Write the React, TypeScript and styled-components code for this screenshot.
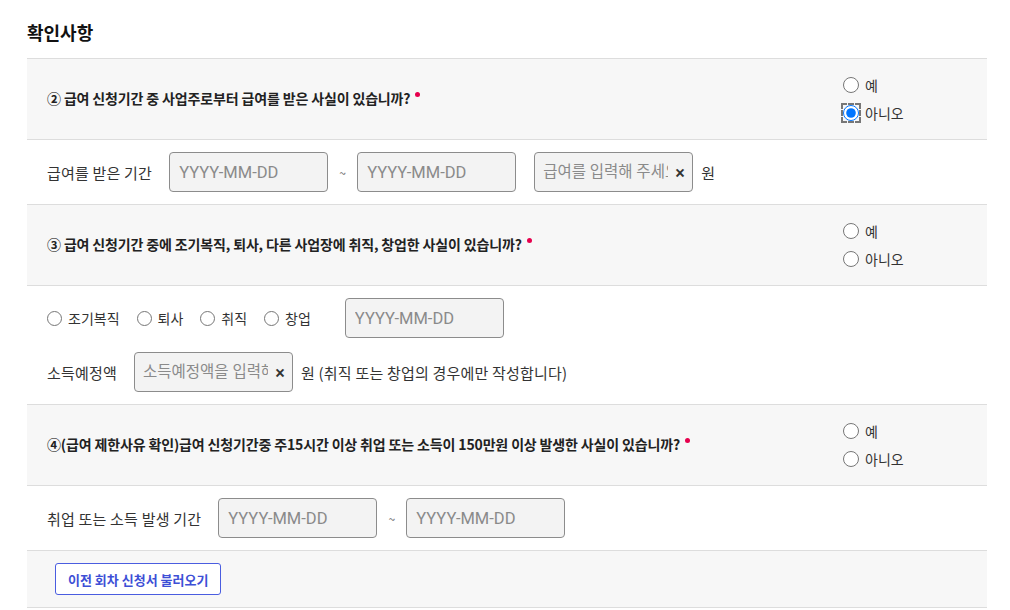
import { createGlobalStyle } from "styled-components";
import styled from "styled-components";

const GlobalStyle = createGlobalStyle`
  body {
    margin: 0;
    background: #fff;
    font-family: "Noto Sans CJK KR", "Noto Sans", sans-serif;
    color: #222;
  }
`;

const yesNo = ["예", "아니오"];
const changeOptions = ["조기복직", "퇴사", "취직", "창업"];

export default function App() {
  return (
    <Page>
      <GlobalStyle />
      <Title>확인사항</Title>
      <Section>
        <QuestionRow>
          <QuestionText>
            ② 급여 신청기간 중 사업주로부터 급여를 받은 사실이 있습니까?
            <Required />
          </QuestionText>
          <RadioGroup>
            {yesNo.map((label) => (
              <RadioLabel key={label}>
                <Radio
                  type="radio"
                  name="q2"
                  defaultChecked={label === "아니오"}
                  $focused={label === "아니오"}
                />
                {label}
              </RadioLabel>
            ))}
          </RadioGroup>
        </QuestionRow>
        <AnswerRow>
          <Line>
            <FieldLabel>급여를 받은 기간</FieldLabel>
            <DateInput placeholder="YYYY-MM-DD" />
            <Tilde>~</Tilde>
            <DateInput placeholder="YYYY-MM-DD" />
            <ClearBox $offset={18}>
              <ClearInput placeholder="급여를 입력해 주세요" />
              <ClearButton type="button">×</ClearButton>
            </ClearBox>
            <Unit>원</Unit>
          </Line>
        </AnswerRow>

        <QuestionRow>
          <QuestionText>
            ③ 급여 신청기간 중에 조기복직, 퇴사, 다른 사업장에 취직, 창업한 사실이 있습니까?
            <Required />
          </QuestionText>
          <RadioGroup>
            {yesNo.map((label) => (
              <RadioLabel key={label}>
                <Radio type="radio" name="q3" />
                {label}
              </RadioLabel>
            ))}
          </RadioGroup>
        </QuestionRow>
        <AnswerRow>
          <Line>
            {changeOptions.map((label) => (
              <InlineRadio key={label}>
                <Radio type="radio" name="change" $size={15} />
                {label}
              </InlineRadio>
            ))}
            <DateInput placeholder="YYYY-MM-DD" $offset={17} />
          </Line>
          <Line>
            <FieldLabel>소득예정액</FieldLabel>
            <ClearBox>
              <ClearInput placeholder="소득예정액을 입력해 주세요" />
              <ClearButton type="button">×</ClearButton>
            </ClearBox>
            <Unit>원 (취직 또는 창업의 경우에만 작성합니다)</Unit>
          </Line>
        </AnswerRow>

        <QuestionRow>
          <QuestionText>
            ④(급여 제한사유 확인)급여 신청기간중 주15시간 이상 취업 또는 소득이 150만원 이상 발생한 사실이 있습니까?
            <Required />
          </QuestionText>
          <RadioGroup>
            {yesNo.map((label) => (
              <RadioLabel key={label}>
                <Radio type="radio" name="q4" />
                {label}
              </RadioLabel>
            ))}
          </RadioGroup>
        </QuestionRow>
        <AnswerRow>
          <Line>
            <FieldLabel>취업 또는 소득 발생 기간</FieldLabel>
            <DateInput placeholder="YYYY-MM-DD" />
            <Tilde>~</Tilde>
            <DateInput placeholder="YYYY-MM-DD" />
          </Line>
        </AnswerRow>

        <FooterRow>
          <LoadButton type="button">이전 회차 신청서 불러오기</LoadButton>
        </FooterRow>
      </Section>
    </Page>
  );
}

const Page = styled.div`
  padding: 19px 23px 0 27px;
`;

const Title = styled.h2`
  margin: 0 0 13px;
  font-size: 18px;
  line-height: 26px;
  font-weight: 700;
  color: #111;
`;

const Section = styled.div`
  border-top: 1px solid #ddd;
`;

const QuestionRow = styled.div`
  display: flex;
  align-items: center;
  min-height: 80px;
  padding-left: 20px;
  background: #f7f7f7;
  border-bottom: 1px solid #ddd;
`;

const QuestionText = styled.div`
  flex: 1;
  margin-top: -2px;
  font-size: 14px;
  font-weight: 700;
  color: #222;
  letter-spacing: -0.15px;
`;

const Required = styled.span`
  display: inline-block;
  width: 5px;
  height: 5px;
  margin-left: 5px;
  border-radius: 50%;
  background: #e6004d;
  vertical-align: 7px;
`;

const RadioGroup = styled.div`
  display: flex;
  flex-direction: column;
  width: 144px;
`;

const RadioLabel = styled.label`
  display: flex;
  align-items: center;
  gap: 6px;
  height: 28px;
  font-size: 14px;
  color: #333;
`;

const InlineRadio = styled.label`
  display: flex;
  align-items: center;
  gap: 6px;
  margin-right: 17px;
  font-size: 14px;
  color: #333;
`;

const Radio = styled.input<{ $focused?: boolean; $size?: number }>`
  width: ${({ $size }) => $size ?? 16}px;
  height: ${({ $size }) => $size ?? 16}px;
  margin: 0;
  accent-color: #0075ff;
  outline: ${({ $focused }) => ($focused ? "2px dashed #777" : "none")};
  outline-offset: 0;
`;

const AnswerRow = styled.div`
  display: flex;
  flex-direction: column;
  gap: 14px;
  padding: 12px 20px;
  border-bottom: 1px solid #ddd;
`;

const Line = styled.div`
  display: flex;
  align-items: center;
`;

const FieldLabel = styled.span`
  margin-right: 17px;
  font-size: 15px;
  letter-spacing: 0.2px;
  color: #333;
`;

const DateInput = styled.input<{ $offset?: number }>`
  box-sizing: border-box;
  width: 159px;
  height: 40px;
  margin-left: ${({ $offset }) => $offset ?? 0}px;
  padding: 0 9px;
  border: 1px solid #8c8c8c;
  border-radius: 4px;
  background: #f3f3f3;
  font-family: Roboto, "Noto Sans CJK KR", sans-serif;
  font-size: 16.5px;
  color: #333;

  &::placeholder {
    color: #8a8a8a;
  }
`;

const Tilde = styled.span`
  width: 29px;
  text-align: center;
  font-size: 12px;
  color: #666;
`;

const ClearBox = styled.div<{ $offset?: number }>`
  box-sizing: border-box;
  display: flex;
  align-items: center;
  width: 159px;
  height: 40px;
  margin-left: ${({ $offset }) => $offset ?? 0}px;
  padding-left: 8px;
  border: 1px solid #8c8c8c;
  border-radius: 4px;
  background: #f3f3f3;
`;

const ClearInput = styled.input`
  flex: 1;
  min-width: 0;
  padding: 0;
  border: none;
  background: transparent;
  outline: none;
  font-family: Roboto, "Noto Sans CJK KR", sans-serif;
  font-size: 15.5px;
  color: #333;

  &::placeholder {
    color: #8a8a8a;
  }
`;

const ClearButton = styled.button`
  width: 24px;
  padding: 0;
  border: none;
  background: transparent;
  font-family: Roboto, sans-serif;
  font-size: 18px;
  font-weight: 500;
  color: #333;
  cursor: pointer;
`;

const Unit = styled.span`
  margin-left: 8px;
  font-size: 15px;
  letter-spacing: 0.2px;
  color: #333;
`;

const FooterRow = styled.div`
  padding: 12px 28px;
  background: #f7f7f7;
  border-bottom: 1px solid #ddd;
`;

const LoadButton = styled.button`
  height: 32px;
  padding: 0 12px;
  border: 1px solid #4a5de0;
  border-radius: 3px;
  background: #fff;
  font-family: inherit;
  font-size: 13px;
  font-weight: 700;
  color: #3d4fd6;
  cursor: pointer;
`;
